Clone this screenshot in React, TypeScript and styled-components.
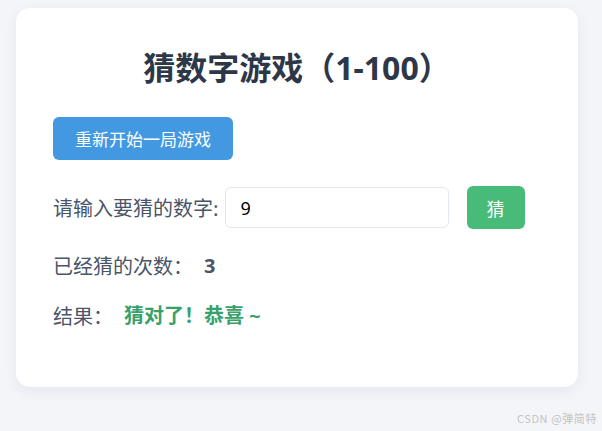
import styled, {createGlobalStyle} from 'styled-components'

const GlobalStyle = createGlobalStyle`
  body {
    margin: 0;
    background: #f4f5f9;
    font-family: "Noto Sans", "Noto Sans CJK SC", sans-serif;
  }
`

const Page = styled.div`
  position: relative;
  height: 431px;
  padding: 8px 0 0 16px;
  box-sizing: border-box;
`

const Card = styled.div`
  width: 562px;
  box-sizing: border-box;
  padding: 37px 37px 57px;
  background: #fff;
  border-radius: 14px;
  box-shadow: 0 4px 14px rgba(30, 40, 80, 0.07);
  display: flex;
  flex-direction: column;
  align-items: flex-start;
`

const Title = styled.h1`
  align-self: stretch;
  margin: 0 0 26px;
  font-size: 32px;
  line-height: 46px;
  font-weight: 700;
  color: #2d3748;
  text-align: center;
`

const Button = styled.button<{$color: string}>`
  height: 43px;
  padding: 0 ${p => (p.$color === 'green' ? '20px' : '22px')};
  border: none;
  border-radius: 6px;
  background: ${p => (p.$color === 'green' ? '#48bb78' : '#4299e1')};
  color: #fff;
  font-family: "Noto Sans CJK SC", sans-serif;
  font-size: ${p => (p.$color === 'green' ? '18px' : '17px')};
  cursor: pointer;
`

const RestartButton = styled(Button)`
  margin-bottom: 26px;
`

const Row = styled.div<{$gap?: number}>`
  display: flex;
  align-items: center;
  margin-bottom: ${p => p.$gap ?? 20}px;
  font-size: 20px;
  line-height: 29px;
  color: #4a5568;
`

const Label = styled.span`
  font-family: "Noto Sans CJK SC", sans-serif;
`

const Input = styled.input`
  width: 224px;
  height: 41px;
  box-sizing: border-box;
  margin: 0 18px 0 6px;
  padding: 0 15px;
  border: 1px solid #e2e8f0;
  border-radius: 6px;
  font-family: "Noto Sans", sans-serif;
  font-size: 18px;
  color: #000;
  outline: none;
`

const Value = styled.span<{$success?: boolean}>`
  margin-left: 11px;
  font-weight: 700;
  color: ${p => (p.$success ? '#38a169' : '#4a5568')};
  font-family: "Noto Sans", "Noto Sans CJK SC", sans-serif;
`

const Watermark = styled.div`
  position: absolute;
  right: 5px;
  bottom: 5px;
  font-family: "Noto Sans CJK SC", sans-serif;
  font-size: 11px;
  letter-spacing: 0.6px;
  color: #c3c3c3;
`

function App() {
  return (
    <>
      <GlobalStyle />
      <Page>
        <Card>
          <Title>猜数字游戏（1-100）</Title>
          <RestartButton $color="blue">重新开始一局游戏</RestartButton>
          <Row $gap={22}>
            <Label>请输入要猜的数字:</Label>
            <Input type="text" defaultValue="9" />
            <Button $color="green">猜</Button>
          </Row>
          <Row $gap={21}>
            <Label>已经猜的次数：</Label>
            <Value>3</Value>
          </Row>
          <Row $gap={0}>
            <Label>结果：</Label>
            <Value $success>猜对了！恭喜 ~</Value>
          </Row>
        </Card>
        <Watermark>CSDN @弹简特</Watermark>
      </Page>
    </>
  )
}

export default App
